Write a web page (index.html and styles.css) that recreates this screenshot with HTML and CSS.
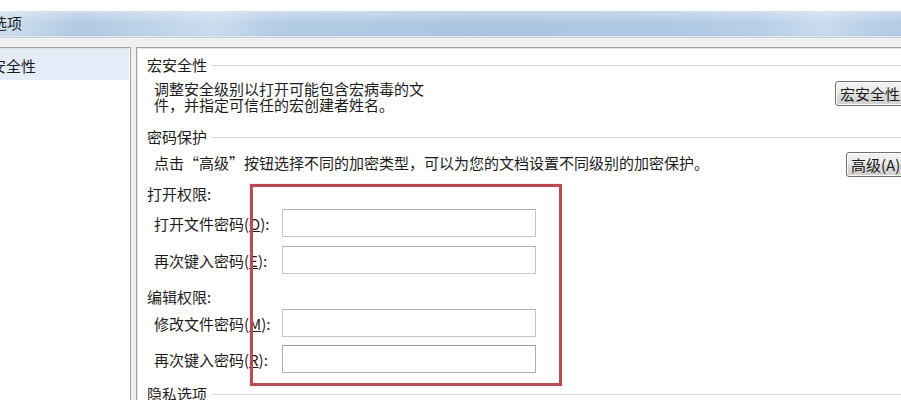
FILE: index.html
```html
<!DOCTYPE html>
<html>
<head>
    <meta charset="utf-8">
    <link rel="stylesheet" href="styles.css">
</head>
<body>
    <div class="dialog">
        <div class="titlebar">选项</div>
        <div class="window">
            <div class="sidebar">
                <div class="nav-item selected">安全性</div>
            </div>
            <div class="main">
                <div class="legend">宏安全性</div>
                <div class="desc-row">
                    <div class="desc macro-text">调整安全级别以打开可能包含宏病毒的文<br>件，并指定可信任的宏创建者姓名。</div>
                    <button class="btn">宏安全性(S)...</button>
                </div>

                <div class="legend pw-legend">密码保护</div>
                <div class="desc-row hint-row">
                    <div class="desc hint-text">点击“高级”按钮选择不同的加密类型，可以为您的文档设置不同级别的加密保护。</div>
                    <button class="btn">高级(A)...</button>
                </div>

                <div class="sub-title open-title">打开权限:</div>
                <div class="field-row first">
                    <label for="openPw">打开文件密码(<u>O</u>):</label>
                    <input type="password" id="openPw">
                </div>
                <div class="field-row second">
                    <label for="openPw2">再次键入密码(<u>E</u>):</label>
                    <input type="password" id="openPw2">
                </div>

                <div class="sub-title edit-title">编辑权限:</div>
                <div class="field-row third">
                    <label for="editPw">修改文件密码(<u>M</u>):</label>
                    <input type="password" id="editPw">
                </div>
                <div class="field-row fourth">
                    <label for="editPw2">再次键入密码(<u>R</u>):</label>
                    <input type="password" id="editPw2" class="focused">
                </div>

                <div class="legend privacy-legend">隐私选项</div>
            </div>
        </div>
    </div>
    <div class="highlight"></div>
</body>
</html>
```

FILE: styles.css
```css
html, body {
  margin: 0;
  height: 400px;
  overflow: hidden;
  background: #fff;
}

body {
  position: relative;
  font-family: "Noto Sans CJK SC", "Noto Sans", sans-serif;
  font-size: 15px;
  color: #1b1b1b;
}

.dialog {
  margin-left: -20px;
  margin-top: 11px;
  width: 980px;
}

.titlebar {
  height: 25px;
  line-height: 23px;
  padding-left: 12px;
  color: #1e1e1e;
  background:
    linear-gradient(180deg, rgba(255,255,255,0.35) 0%, rgba(255,255,255,0.05) 45%, rgba(255,255,255,0) 100%),
    linear-gradient(90deg, #d4e2f0 0%, #c7d9ec 4%, #afc8e2 10%, #b9d0e8 16%, #c9dbee 24%, #b2cbe5 30%, #a9c4e1 50%, #adc7e3 70%, #b6cee8 80%, #c8daee 86%, #b3cbe6 92%, #aec8e4 100%);
  border-bottom: 1px solid #e4ecf4;
}

.window {
  display: flex;
  gap: 5px;
  padding: 9px 0 0 8px;
  height: 400px;
  background: #f0f0f0;
  border-top: 1px solid #c6ced6;
}

.sidebar {
  width: 139px;
  background: #fff;
  border: 1px solid #a3a3a3;
  box-shadow: inset 1px 1px 0 #e2e2e2;
  padding: 1px;
}

.nav-item {
  height: 31px;
  line-height: 34px;
  padding-left: 1px;
}

.nav-item.selected {
  background: #e4ecf8;
}

.main {
  flex: 1;
  background: #fff;
  border: 1px solid #a3a3a3;
  box-shadow: inset 1px 1px 0 #e6e6e6;
  padding-left: 10px;
}

.legend {
  display: flex;
  align-items: center;
  height: 16px;
  line-height: 16px;
  margin-top: 9px;
}

.legend::after {
  content: '';
  flex: 1;
  border-top: 1px solid #d3d7dc;
  margin-left: 5px;
}

.pw-legend {
  margin-top: 16px;
}

.privacy-legend {
  margin-top: 13px;
}

.desc-row {
  display: flex;
  align-items: flex-start;
  margin-top: 8px;
  padding-left: 7px;
}

.desc {
  line-height: 16px;
}

.macro-text {
  width: 681px;
}

.hint-row {
  margin-top: 7px;
  align-items: center;
}

.hint-text {
  width: 692px;
  margin-top: -3px;
}

.btn {
  height: 25px;
  padding: 0 4px;
  font-family: inherit;
  font-size: 15px;
  color: #1b1b1b;
  white-space: nowrap;
  border: 1px solid #707070;
  border-radius: 3px;
  background: linear-gradient(180deg, #f2f2f2 0%, #ebebeb 48%, #dddddd 52%, #cfcfcf 100%);
  box-shadow: inset 0 0 0 1px #fbfbfb;
}

.sub-title {
  height: 16px;
  line-height: 16px;
}

.open-title {
  margin-top: 9px;
}

.edit-title {
  margin-top: 15px;
}

.field-row {
  display: flex;
  align-items: center;
  padding-left: 7px;
}

.field-row label {
  width: 128px;
  white-space: nowrap;
}

.field-row u {
  text-decoration: underline;
}

.field-row input {
  width: 254px;
  height: 28px;
  box-sizing: border-box;
  margin: 0;
  border: 1px solid #c2c5ca;
  border-top-color: #adb1b7;
  background: #fff;
}

.field-row input.focused {
  border-color: #a5b0ba;
  border-top-color: #8f9ba6;
}

.field-row.first {
  margin-top: 7px;
}

.field-row.second {
  margin-top: 9px;
}

.field-row.third {
  margin-top: 4px;
}

.field-row.fourth {
  margin-top: 8px;
}

.highlight {
  position: absolute;
  left: 250px;
  top: 184px;
  width: 306px;
  height: 196px;
  border: 3px solid #bb4a54;
  box-shadow: 0 0 1px rgba(187, 74, 84, 0.6);
}
```
